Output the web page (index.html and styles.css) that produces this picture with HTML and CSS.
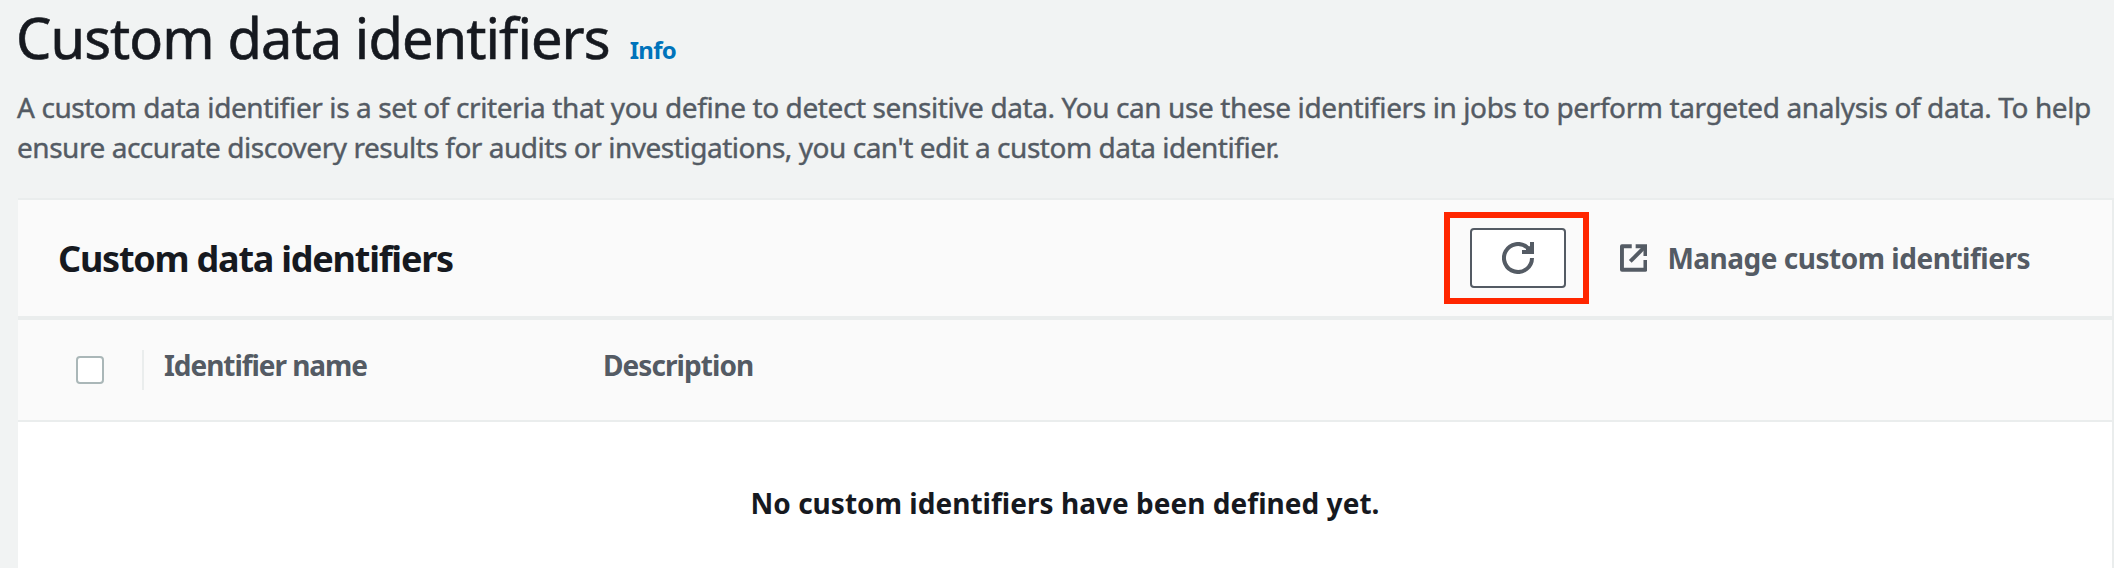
FILE: index.html
```
<!DOCTYPE html>
<html lang="en">
	<head>
		<meta charset="utf-8">
		<title>Custom data identifiers</title>
		<link rel="stylesheet" href="styles.css">
	</head>
	<body>
		<div class="header">
			<h1>Custom data identifiers</h1>
			<a class="info">Info</a>
		</div>
		<p class="description">
			A custom data identifier is a set of criteria that you define to detect sensitive data. You can use these identifiers in jobs to perform targeted analysis of data. To help<br>
			<span class="second">ensure accurate discovery results for audits or investigations, you can't edit a custom data identifier.</span>
		</p>
		<div class="panel">
			<div class="panel-header">
				<h2>Custom data identifiers</h2>
				<div class="highlight">
					<button type="button" class="refresh" aria-label="Refresh">
						<svg width="32" height="32" viewBox="0 0 32 32" fill="none" stroke="#545b64" stroke-width="4">
							<path d="M30 16A14 14 0 1 1 25.500 5.700L28 8.500"/>
							<path d="M30 0V10H20"/>
							<path d="M24 6L28 4V10H24Z" fill="#545b64" stroke="none"/>
						</svg>
					</button>
				</div>
				<a class="manage">
					<svg width="28" height="28" viewBox="0 0 28 28" fill="none" stroke="#545b64" stroke-width="4">
						<path d="M12 2H2V26H26V16" stroke-linejoin="round"/>
						<path d="M16 2H26V12"/>
						<path d="M10.500 17.500L25 3"/>
					</svg>
					<span>Manage custom identifiers</span>
				</a>
			</div>
			<div class="table-head">
				<div class="check-cell"><span class="checkbox"></span></div>
				<div class="name-cell">Identifier name</div>
				<div class="desc-cell">Description</div>
			</div>
			<div class="empty">No custom identifiers have been defined yet.</div>
		</div>
	</body>
</html>
```
FILE: styles.css
```
*{
	box-sizing:border-box;
}
body{
	margin:0;
	height:568px;
	overflow:hidden;
	display:flex;
	flex-direction:column;
	background-color:#f1f3f3;
	font-family:"Noto Sans","Open Sans",sans-serif;
	font-size:28px;
	line-height:40px;
	color:#16191f;
}
h1,h2,p{
	margin:0;
}
.header{
	display:flex;
	align-items:baseline;
	height:73px;
	padding:1px 0 0 16px;
}
h1{
	font-size:56px;
	font-weight:400;
	line-height:72px;
	letter-spacing:-0.92px;
	white-space:nowrap;
	-webkit-text-stroke:0.6px #16191f;
}
.info{
	margin-left:20px;
	font-size:24px;
	font-weight:700;
	letter-spacing:-0.741px;
	color:#0073bb;
}
.description{
	margin-top:14px;
	padding-left:17px;
	color:#545b64;
	letter-spacing:-0.396px;
	white-space:nowrap;
	-webkit-text-stroke:0.4px #545b64;
}
.second{
	letter-spacing:-0.465px;
}
.panel{
	flex:1;
	display:flex;
	flex-direction:column;
	margin:31px 0 0 18px;
	border-top:2px solid #eaeded;
	border-right:2px solid #eaeded;
	background-color:#ffffff;
}
.panel-header{
	display:flex;
	align-items:center;
	height:120px;
	padding:0 82px 0 40px;
	background-color:#fafafa;
	border-bottom:4px solid #eaeded;
}
h2{
	flex:1;
	padding-top:2px;
	font-size:36px;
	font-weight:700;
	letter-spacing:-1.231px;
}
.highlight{
	width:145px;
	height:92px;
	padding:10px 17px 10px 20px;
	border:6px solid #ff2600;
}
.refresh{
	display:flex;
	align-items:center;
	justify-content:center;
	width:96px;
	height:60px;
	padding:0;
	border:2px solid #545b64;
	border-radius:4px;
	background-color:#ffffff;
}
.manage{
	display:flex;
	align-items:center;
	width:441px;
	padding-left:31px;
	font-weight:700;
	color:#545b64;
	letter-spacing:-0.487px;
	white-space:nowrap;
}
.manage span{
	margin:-1px 0 0 20px;
}
.table-head{
	display:flex;
	height:102px;
	padding-top:25px;
	background-color:#fafafa;
	border-bottom:2px solid #eaeded;
	font-weight:700;
	color:#545b64;
}
.check-cell{
	width:126px;
	height:40px;
	margin-top:5px;
	padding:6px 0 0 58px;
	border-right:2px solid #eaeded;
}
.checkbox{
	display:block;
	width:28px;
	height:28px;
	border:2px solid #aab7b8;
	border-radius:4px;
	background-color:#ffffff;
}
.name-cell{
	width:439px;
	padding-left:20px;
	letter-spacing:-1.05px;
}
.desc-cell{
	padding-left:20px;
	letter-spacing:-0.932px;
}
.empty{
	padding-top:61px;
	font-weight:700;
	letter-spacing:0.032px;
	text-align:center;
}
```
